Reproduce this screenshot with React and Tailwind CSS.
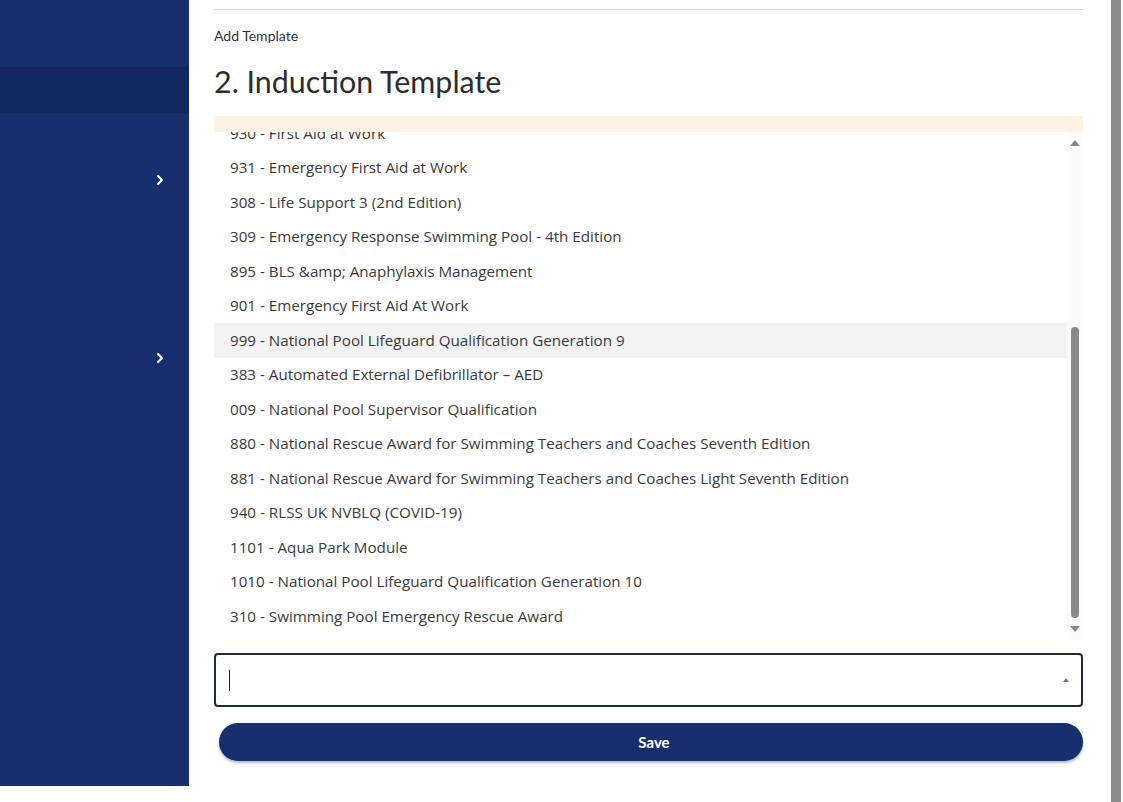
const items = [
  '930 - First Aid at Work',
  '931 - Emergency First Aid at Work',
  '308 - Life Support 3 (2nd Edition)',
  '309 - Emergency Response Swimming Pool - 4th Edition',
  '895 - BLS &amp; Anaphylaxis Management',
  '901 - Emergency First Aid At Work',
  '999 - National Pool Lifeguard Qualification Generation 9',
  '383 - Automated External Defibrillator \u2013 AED',
  '009 - National Pool Supervisor Qualification',
  '880 - National Rescue Award for Swimming Teachers and Coaches Seventh Edition',
  '881 - National Rescue Award for Swimming Teachers and Coaches Light Seventh Edition',
  '940 - RLSS UK NVBLQ (COVID-19)',
  '1101 - Aqua Park Module',
  '1010 - National Pool Lifeguard Qualification Generation 10',
  '310 - Swimming Pool Emergency Rescue Award',
]

function Chevron() {
  return (
    <svg width="10" height="12" viewBox="0 0 10 12" fill="none">
      <path d="M3 2l4 4-4 4" stroke="white" strokeWidth="2" strokeLinecap="round" strokeLinejoin="round" />
    </svg>
  )
}

export default function App() {
  return (
    <div className="relative flex h-[802px] w-[1123px] overflow-hidden bg-white" style={{ fontFamily: '"Open Sans", sans-serif' }}>
      {/* sidebar */}
      <aside className="flex h-[786px] w-[189px] shrink-0 flex-col bg-[#172f6e]">
        <div className="h-[67px]" />
        <div className="h-[46px] bg-[#13285f]" />
        <div className="flex h-[134px] items-center justify-end pr-[24px]">
          <Chevron />
        </div>
        <div className="h-[45px]" />
        <div className="flex h-[134px] items-center justify-end pr-[24px] -mt-[1px]">
          <Chevron />
        </div>
      </aside>

      {/* main */}
      <main className="flex w-[869px] flex-col pl-[25px] pt-[9px]">
        <div className="h-px w-[869px] bg-[#dcdcdc]" />
        <div className="mt-[17px] text-[14px] leading-[18px] text-[#2b3445]" style={{ fontFamily: 'Lato, sans-serif' }}>Add Template</div>
        <h1 className="mt-[16px] text-[30.4px] leading-[40px] text-[#2d2d2d]" style={{ fontFamily: 'Lato, sans-serif' }}>2. Induction Template</h1>

        <div className="relative mt-[15px] h-[524px] w-[869px] overflow-hidden">
          <div className="w-[853px]">
            {items.map((t, i) => (
              <div
                key={t}
                className={`flex h-[34.5px] items-center pl-[16px] text-[15.2px] text-[#3a3a3a] ${i === 6 ? 'bg-[#f3f3f3]' : ''}`}
              >
                {t}
              </div>
            ))}
          </div>
          <div className="absolute left-0 top-0 h-[16px] w-full bg-[#fff3e5]" />
          {/* scrollbar */}
          <div className="absolute right-0 top-[16px] flex h-[508px] w-[16px] flex-col items-center bg-[#fbfbfb]">
            <div className="mt-[8px] h-0 w-0 border-x-[5px] border-b-[6px] border-x-transparent border-b-[#8a8a8a]" />
            <div className="mt-[181px] h-[291px] w-[8px] rounded-full bg-[#8a8a8a]" />
            <div className="mt-[8px] h-0 w-0 border-x-[5px] border-t-[6px] border-x-transparent border-t-[#8a8a8a]" />
          </div>
        </div>

        <div className="mt-[13px] flex h-[54px] w-[869px] items-center rounded-[4px] border-2 border-[#1f2a3a] px-[13px]">
          <div className="h-[21px] w-px bg-[#222]" />
          <div className="ml-auto -mr-[1px] h-0 w-0 border-x-[3.5px] border-b-[4px] border-x-transparent border-b-[#777]" />
        </div>

        <button className="ml-[5px] mt-[16px] flex h-[38px] w-[864px] items-center justify-center rounded-full bg-[#172f6e] pl-[6px] text-[15px] font-bold text-white shadow-[0_2px_3px_rgba(23,47,110,0.35)]" style={{ fontFamily: 'Lato, sans-serif' }}>
          Save
        </button>
      </main>

      {/* page scrollbar */}
      <div className="absolute right-[2px] top-0 h-[802px] w-[10px] bg-[#8c8c8c]" />
    </div>
  )
}
